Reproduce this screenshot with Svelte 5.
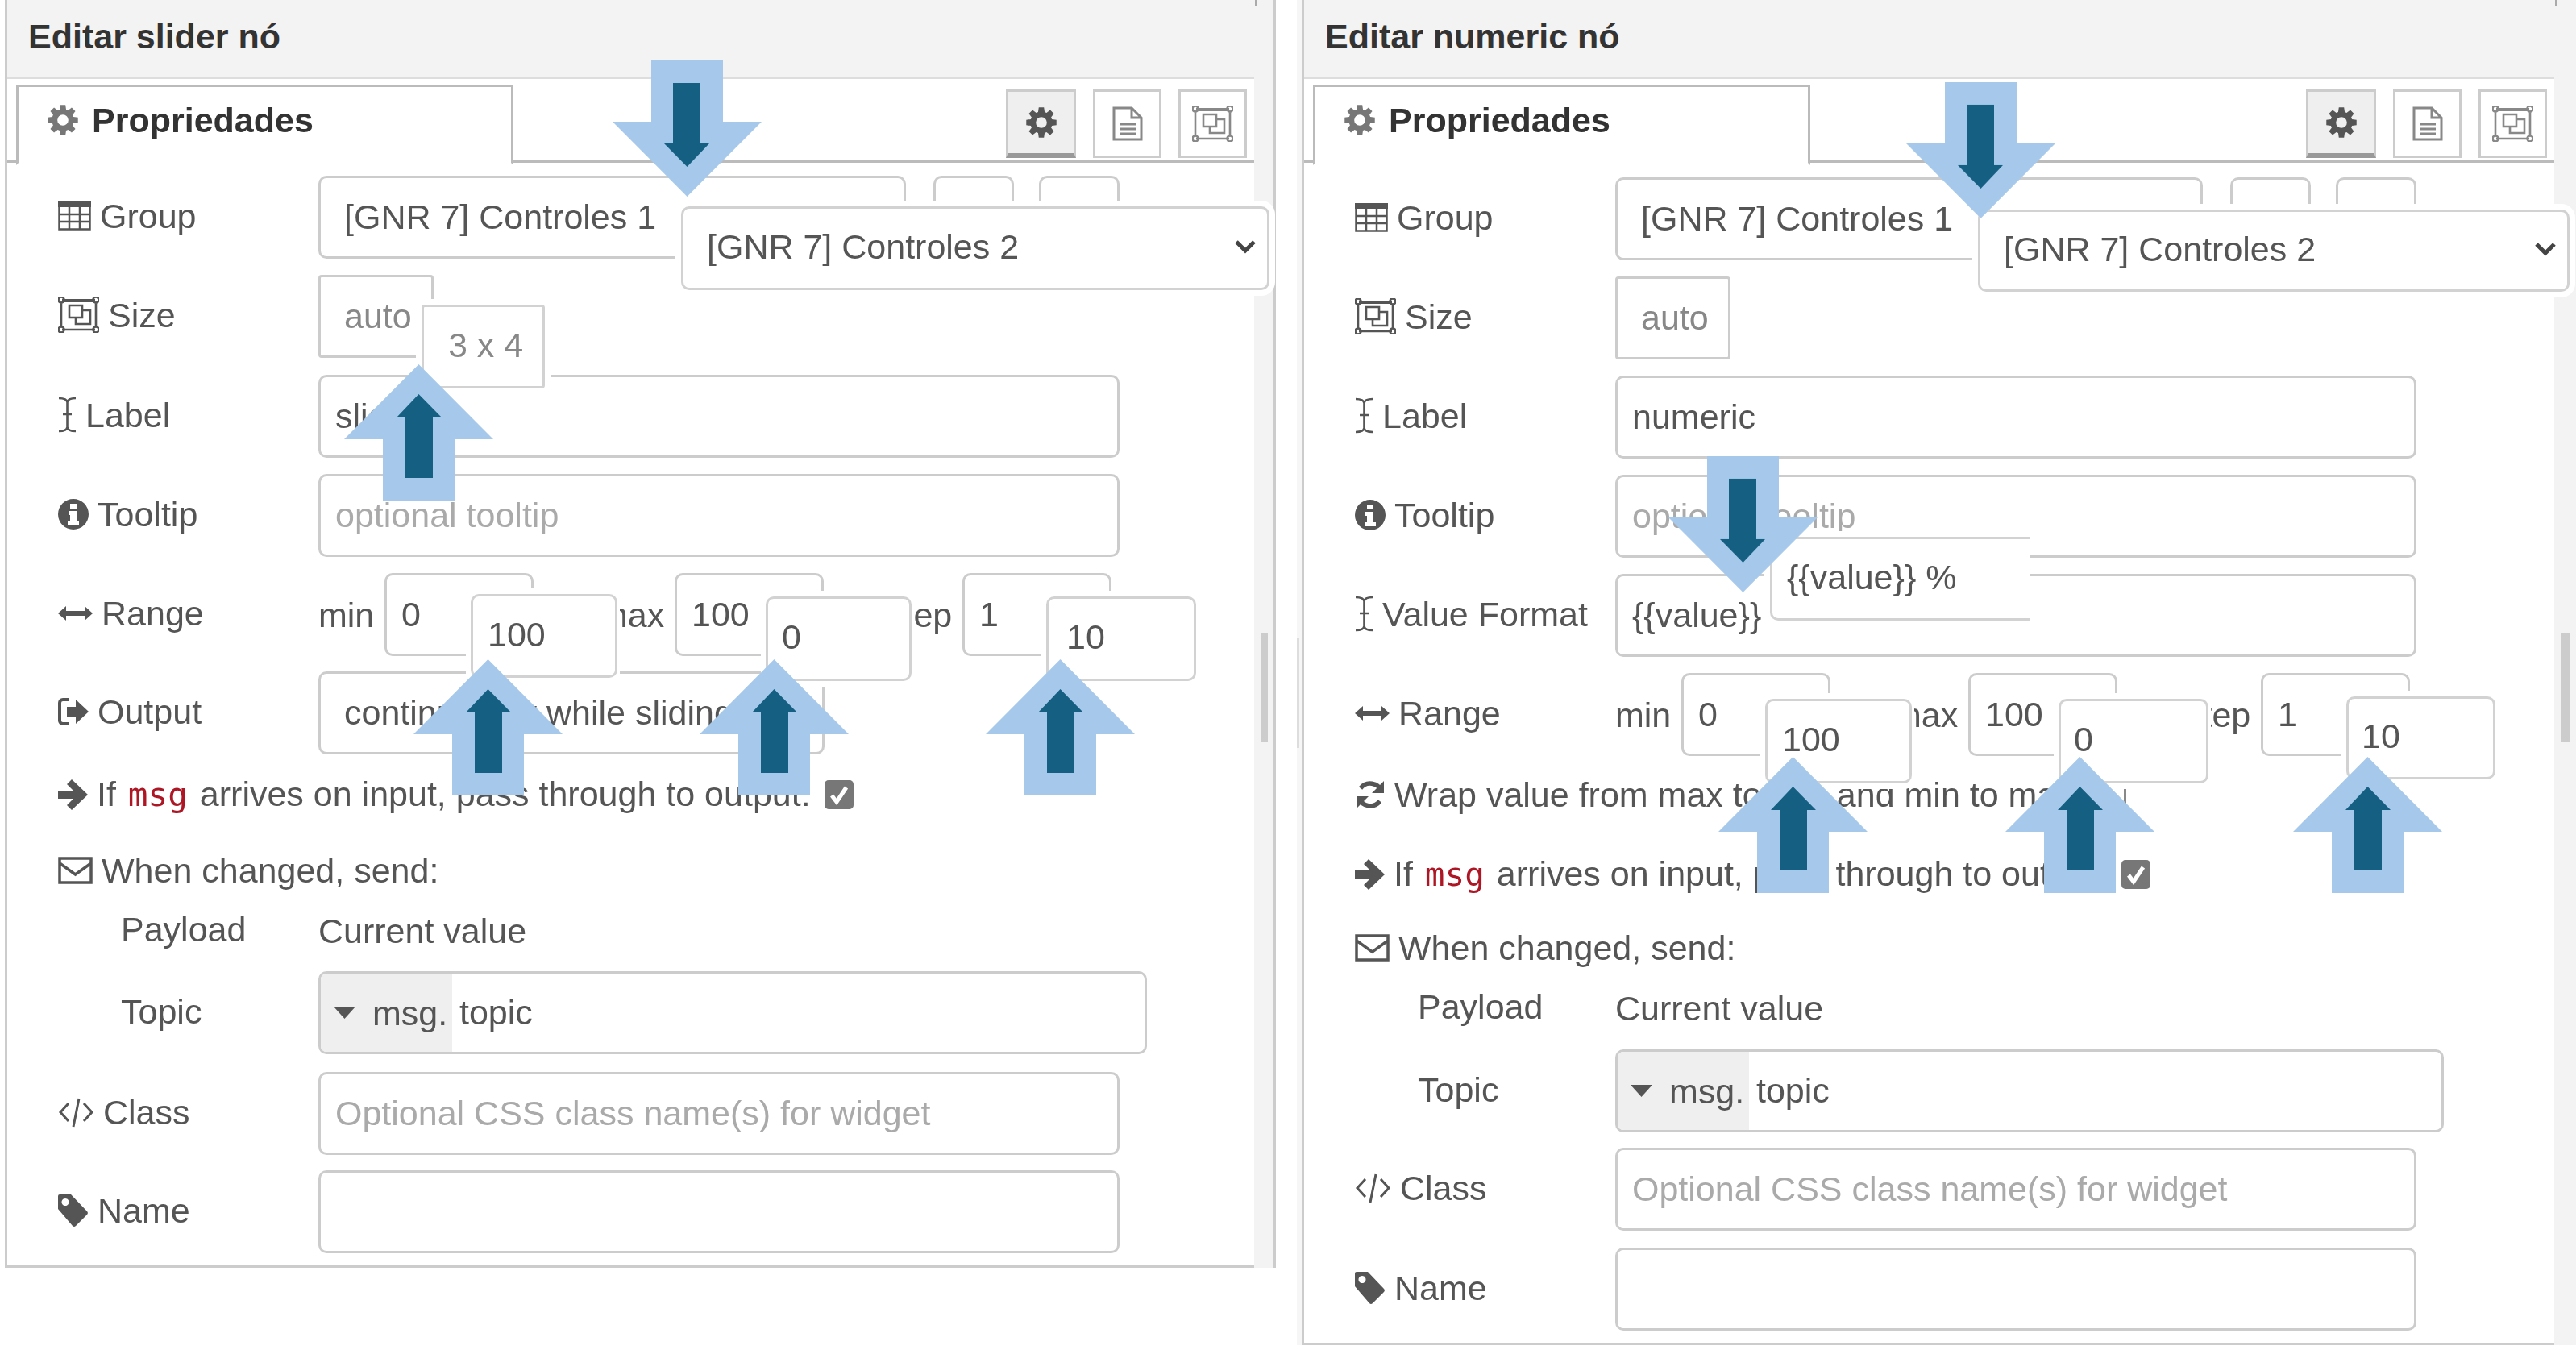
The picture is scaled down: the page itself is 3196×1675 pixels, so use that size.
<script>
  // gear outline shared by the tab and the toolbar button
  function gearPath(size) {
    const c = size / 2;
    const pts = [];
    for (let i = 0; i < 8; i++) {
      const a = (i * Math.PI) / 4;
      for (const [r, da] of [[c * 0.72, -0.3], [c, -0.17], [c, 0.17], [c * 0.72, 0.3]]) {
        pts.push(`${(c + r * Math.sin(a + da)).toFixed(2)} ${(c - r * Math.cos(a + da)).toFixed(2)}`);
      }
    }
    const h = c * 0.36;
    return `M${pts.join('L')}z M${c - h} ${c}a${h} ${h} 0 1 0 ${2 * h} 0a${h} ${h} 0 1 0 ${-2 * h} 0z`;
  }

  const corner = (x, y) => `M${x - 3.5} ${y}a3.5 3.5 0 1 0 7 0a3.5 3.5 0 1 0-7 0z`;

  const icons = {
    cog: { w: 38, h: 38, fill: gearPath(38) },
    table: { w: 41, h: 36, fill: 'M0 0h41v7H0z', stroke: 'M1.5 7v27.5h38V7M1.5 16h38M1.5 25h38M14 7v27M27 7v27', sw: 2.5 },
    size: {
      w: 51, h: 45, fill: 'M5 3h41v4H5z',
      stroke: `M5 41h41M4 7v31M47 7v31M14 11h16v15H14zM22 26v8h18V17h-10${corner(4, 4)}${corner(47, 4)}${corner(4, 41)}${corner(47, 41)}`,
      sw: 2.6
    },
    cursor: { w: 23, h: 45, stroke: 'M1 2c6 0 10 1 10.5 5v31c-.5 4-4.5 5-10.5 5M22 2c-6 0-10 1-10.5 5M22 43c-6 0-10-1-10.5-5M6 22h11', sw: 2.6 },
    info: { w: 38, h: 38, fill: 'M19 0a19 19 0 1 0 0 38a19 19 0 1 0 0-38zM15 6h8v6h-8zM13 15h10v13h3v5H12v-5h3v-8h-2z' },
    range: { w: 43, h: 18, fill: 'M0 9l10-9v6h23V0l10 9-10 9v-6H10v6z' },
    output: { w: 38, h: 38, fill: 'M11 13h11V4l16 15-16 15v-9H11z', stroke: 'M14 4H6a4 4 0 0 0-4 4v22a4 4 0 0 0 4 4h8', sw: 4 },
    arrow: { w: 37, h: 38, fill: 'M0 14h19L11 6l6-6 20 19-20 19-6-6 8-8H0z' },
    mail: { w: 43, h: 34, stroke: 'M2 2h39v30H2zM2 8l19.5 14L41 8', sw: 3.5 },
    code: { w: 45, h: 38, stroke: 'M13 8L3 19l10 11M32 8l10 11-10 11M26 2l-7 35', sw: 3 },
    tag: { w: 38, h: 40, fill: 'M2 0h14l20 21a3 3 0 0 1 0 4L22 39a3 3 0 0 1-4 0L0 18V2a2 2 0 0 1 2-2zM9 5a4.5 4.5 0 1 0 .01 0z' },
    refresh: { w: 38, h: 38, fill: 'M36 2v15H21zM2 36V21h15z', stroke: 'M33 15A15 15 0 0 0 7 11M5 23a15 15 0 0 0 26 4', sw: 5.5 },
    doc: { w: 38, h: 43, stroke: 'M2 2h22l12 12v27H2zM24 2v12h12M9 22h20M9 28h20M9 34h20', sw: 3 }
  };

  const sliderRows = [
    { type: 'group', gap: 0 },
    { type: 'size', gap: 20 },
    { type: 'field', icon: 'cursor', label: 'Label', value: 'slider', gap: 21 },
    { type: 'field', icon: 'info', label: 'Tooltip', hint: 'optional tooltip', gap: 20 },
    { type: 'range', gap: 20 },
    { type: 'output', gap: 19 },
    { type: 'pass', gap: 24 },
    { type: 'when', gap: 44 },
    { type: 'payload', gap: 25 },
    { type: 'topic', gap: 25 },
    { type: 'field', icon: 'code', label: 'Class', hint: 'Optional CSS class name(s) for widget', gap: 22 },
    { type: 'field', icon: 'tag', label: 'Name', gap: 19 }
  ];

  const numericRows = [
    { type: 'group', gap: 0 },
    { type: 'size', gap: 20 },
    { type: 'field', icon: 'cursor', label: 'Label', value: 'numeric', gap: 20 },
    { type: 'field', icon: 'info', label: 'Tooltip', hint: 'optional tooltip', gap: 20 },
    { type: 'field', icon: 'cursor', label: 'Value Format', value: '{{value}}', gap: 20 },
    { type: 'range', gap: 20 },
    { type: 'wrap', gap: 23 },
    { type: 'pass', gap: 48 },
    { type: 'when', gap: 41 },
    { type: 'payload', gap: 25 },
    { type: 'topic', gap: 26 },
    { type: 'field', icon: 'code', label: 'Class', hint: 'Optional CSS class name(s) for widget', gap: 19 },
    { type: 'field', icon: 'tag', label: 'Name', gap: 21 }
  ];

  const panels = [
    { name: 'slider', rows: sliderRows },
    { name: 'numeric', rows: numericRows }
  ];

  // the new values pasted over the screenshot
  const callouts = [
    { x: 845, y: 256, w: 730, h: 104, text: '[GNR 7] Controles 2', pad: 29, chevron: true },
    { x: 523, y: 378, w: 153, h: 104, text: '3 x 4', pad: 30, muted: true, square: true },
    { x: 584, y: 737, w: 182, h: 104, text: '100', pad: 18, tight: true },
    { x: 950, y: 740, w: 181, h: 105, text: '0', pad: 17, tight: true },
    { x: 1298, y: 740, w: 186, h: 105, text: '10', pad: 22 },
    { x: 2454, y: 260, w: 734, h: 102, text: '[GNR 7] Controles 2', pad: 29, chevron: true },
    { x: 2196, y: 666, w: 322, h: 104, text: '{{value}} %', pad: 18, open: true },
    { x: 2190, y: 867, w: 182, h: 105, text: '100', pad: 18, tight: true },
    { x: 2554, y: 867, w: 186, h: 105, text: '0', pad: 16, tight: true },
    { x: 2911, y: 864, w: 185, h: 103, text: '10', pad: 16 }
  ];

  const arrows = [
    { x: 852, y: 75, down: true },
    { x: 519, y: 452 },
    { x: 605, y: 818 },
    { x: 960, y: 818 },
    { x: 1315, y: 818 },
    { x: 2457, y: 102, down: true },
    { x: 2162, y: 566, down: true },
    { x: 2224, y: 939 },
    { x: 2580, y: 939 },
    { x: 2937, y: 939 }
  ];
</script>

{#snippet icon(name)}
  {@const i = icons[name]}
  <svg class="icon" width={i.w} height={i.h} viewBox="0 0 {i.w} {i.h}" aria-hidden="true">
    {#if i.fill}<path d={i.fill} fill="currentColor" fill-rule="evenodd" />{/if}
    {#if i.stroke}<path d={i.stroke} fill="none" stroke="currentColor" stroke-width={i.sw} />{/if}
  </svg>
{/snippet}

{#snippet label(name, text)}
  <span class="label">{@render icon(name)}<span>{text}</span></span>
{/snippet}

{#snippet check(on)}
  <span class="check" class:on>
    {#if on}
      <svg width="36" height="36" viewBox="0 0 36 36" aria-hidden="true">
        <path d="M9 19l6 8 12-18" fill="none" stroke="#fff" stroke-width="5" />
      </svg>
    {/if}
  </span>
{/snippet}

<div class="page">
  {#each panels as panel}
    <section class="panel {panel.name}">
      <header class="title">Editar {panel.name} nó</header>
      <div class="body">
        <div class="content">
          <div class="tabs">
            <div class="tab">
              <span class="tab-icon">{@render icon('cog')}</span>
              Propriedades
            </div>
            <div class="tools">
              <button class="tool active">{@render icon('cog')}</button>
              <button class="tool">{@render icon('doc')}</button>
              <button class="tool">{@render icon('size')}</button>
            </div>
          </div>

          <div class="form">
            {#each panel.rows as row}
              <div class="row" style="margin-top: {row.gap}px">
                {#if row.type === 'group'}
                  {@render label('table', 'Group')}
                  <div class="box select">[GNR 7] Controles 1</div>
                  <div class="box small"></div>
                  <div class="box small"></div>
                {:else if row.type === 'size'}
                  {@render label('size', 'Size')}
                  <div class="box size">auto</div>
                {:else if row.type === 'field'}
                  {@render label(row.icon, row.label)}
                  <input class="box input" value={row.value ?? ''} placeholder={row.hint ?? ''} readonly />
                {:else if row.type === 'range'}
                  {@render label('range', 'Range')}
                  <span class="unit">min</span>
                  <input class="box num" value="0" readonly />
                  <span class="unit next max">max</span>
                  <input class="box num" value="100" readonly />
                  <span class="unit next step">step</span>
                  <input class="box num" value="1" readonly />
                {:else if row.type === 'output'}
                  {@render label('output', 'Output')}
                  <div class="box select output">continuously while sliding</div>
                {:else if row.type === 'pass'}
                  <span class="line">
                    {@render icon('arrow')}
                    <span>If <code>msg</code> arrives on input, pass through to output:</span>
                    {@render check(true)}
                  </span>
                {:else if row.type === 'wrap'}
                  <span class="line">
                    {@render icon('refresh')}
                    <span>Wrap value from max to min and min to max:</span>
                    {@render check(false)}
                  </span>
                {:else if row.type === 'when'}
                  <span class="line">{@render icon('mail')}<span>When changed, send:</span></span>
                {:else if row.type === 'payload'}
                  <span class="label indent">Payload</span>
                  <span>Current value</span>
                {:else if row.type === 'topic'}
                  <span class="label indent">Topic</span>
                  <div class="box typed">
                    <span class="type">
                      <svg width="27" height="15" viewBox="0 0 27 15" aria-hidden="true"><path d="M0 0h27L13.5 15z" fill="#555" /></svg>
                      msg.
                    </span>
                    <span class="typed-value">topic</span>
                  </div>
                {/if}
              </div>
            {/each}
          </div>
        </div>
        <div class="side"><div class="thumb"></div></div>
      </div>
    </section>
  {/each}

  <!-- annotations laid over the two screenshots -->
  {#each callouts as c}
    <div
      class="callout"
      class:muted={c.muted}
      class:square={c.square}
      class:open={c.open}
      class:tight={c.tight}
      style="left: {c.x}px; top: {c.y}px; width: {c.w}px; height: {c.h}px; padding-left: {c.pad}px"
    >
      {c.text}
      {#if c.chevron}
        <svg class="chevron" width="28" height="18" viewBox="0 0 28 18" aria-hidden="true">
          <path d="M3 3l11 11L25 3" fill="none" stroke="#444" stroke-width="5" />
        </svg>
      {/if}
    </div>
  {/each}

  {#each arrows as a}
    <svg
      class="arrow"
      class:down={a.down}
      style="left: {a.x - 92.5}px; top: {a.y}px"
      width="185"
      height="169"
      viewBox="0 0 185 169"
      aria-hidden="true"
    >
      <path d="M92.5 0L185 93h-48v76H48V93H0z" fill="#a6c9eb" />
      <path d="M92.5 37L121 66h-11v75H76V66H65z" fill="#156082" />
    </svg>
  {/each}
</div>

<style>
  :global(body) {
    margin: 0;
    background: #fff;
  }

  .page {
    position: relative;
    display: flex;
    align-items: flex-start;
    width: 3196px;
    height: 1675px;
    padding-left: 6px;
    box-sizing: border-box;
    overflow: hidden;
    background: #fff;
    color: #555;
    font-family: "Liberation Sans", Arial, sans-serif;
    font-size: 43px;
  }

  .panel {
    position: relative;
    flex: none;
    box-sizing: border-box;
    border-left: 3px solid #ccc;
    filter: blur(0.6px);
  }

  .panel.slider {
    width: 1577px;
    border-right: 3px solid #ccc;
  }

  .panel.numeric {
    width: 1581px;
    margin-left: 32px;
    box-shadow: -6px 0 0 #f6f6f6;
  }

  /* faint scrollbar of the panel cropped between the two shots */
  .panel.numeric::before {
    content: "";
    position: absolute;
    left: -9px;
    top: 792px;
    width: 3px;
    height: 136px;
    background: #ddd;
  }

  .title {
    position: relative;
    height: 95px;
    padding-left: 26px;
    background: #f3f3f3;
    color: #333;
    font-weight: 700;
    line-height: 90px;
  }

  .title::after {
    content: "";
    position: absolute;
    top: 0;
    right: 21px;
    width: 2px;
    height: 8px;
    background: #aaa;
  }

  .numeric .title::after {
    right: 24px;
  }

  .body {
    display: flex;
  }

  .content {
    flex: 1;
    min-width: 0;
    border-top: 3px solid #ddd;
    border-bottom: 3px solid #ccc;
  }

  .side {
    flex: none;
    width: 24px;
    padding: 690px 7px 0 9px;
    box-sizing: border-box;
    background: #f3f3f3;
  }

  .numeric .side {
    width: 27px;
  }

  .thumb {
    height: 136px;
    background: #ccc;
  }

  .tabs {
    display: flex;
    align-items: flex-start;
    height: 104px;
    padding-top: 7px;
    box-sizing: border-box;
    border-bottom: 3px solid #bbb;
  }

  .tab {
    display: flex;
    align-items: center;
    gap: 17px;
    width: 617px;
    height: 100px;
    margin-left: 11px;
    padding: 0 0 12px 36px;
    box-sizing: border-box;
    border: 3px solid #bbb;
    border-bottom: 3px solid #fff;
    background: #fff;
    color: #333;
    font-weight: 700;
  }

  .tab-icon {
    display: flex;
    color: #777;
  }

  .tools {
    display: flex;
    gap: 21px;
    margin: 6px 9px 0 auto;
  }

  .tool {
    display: flex;
    align-items: center;
    justify-content: center;
    width: 85px;
    height: 85px;
    padding: 0;
    border: 3px solid #ccc;
    background: #fff;
    color: #888;
  }

  .tool.active {
    width: 87px;
    background: #efefef;
    border-bottom: 6px solid #999;
    color: #555;
  }

  .form {
    padding: 16px 0 15px 63px;
  }

  .numeric .form {
    padding-top: 18px;
  }

  .row {
    display: flex;
    align-items: center;
    min-height: 50px;
    line-height: 50px;
    white-space: nowrap;
  }

  .label {
    display: flex;
    align-items: center;
    gap: 11px;
    flex: none;
    width: 323px;
    transform: translateY(-2px);
  }

  .label.indent {
    padding-left: 78px;
    box-sizing: border-box;
  }

  .icon {
    flex: none;
  }

  .box {
    flex: none;
    height: 103px;
    box-sizing: border-box;
    border: 3px solid #ccc;
    border-radius: 10px;
    background: #fff;
    color: #555;
    font: inherit;
    line-height: 96px;
  }

  input.box {
    outline: none;
  }

  input.box::placeholder {
    color: #aaa;
    opacity: 1;
  }

  .select {
    width: 729px;
    padding-left: 29px;
  }

  .select.output {
    width: 628px;
    overflow: hidden;
  }

  .small {
    width: 100px;
    margin-left: 34px;
  }

  .small + .small {
    margin-left: 31px;
  }

  .size {
    width: 143px;
    padding-left: 29px;
    border-radius: 4px;
    color: #888;
  }

  .input {
    width: 994px;
    padding: 0 18px;
  }

  .unit {
    width: 69px;
    margin-right: 13px;
  }

  .unit.next {
    width: 81px;
  }

  .unit.max {
    margin-left: 81px;
  }

  .unit.step {
    margin-left: 78px;
  }

  .numeric .unit.max {
    margin-left: 77px;
  }

  .numeric .unit.step {
    margin-left: 84px;
  }

  .num {
    width: 185px;
    padding: 0 18px;
  }

  .line {
    display: flex;
    align-items: center;
    gap: 11px;
  }

  .line code {
    margin: 0 3px;
    color: #ad1625;
    font-family: "DejaVu Sans Mono", monospace;
    font-size: 41px;
  }

  .check {
    flex: none;
    width: 36px;
    height: 36px;
    margin-left: 6px;
    box-sizing: border-box;
    border: 3px solid #888;
    border-radius: 5px;
    background: #fff;
  }

  .check.on {
    border: none;
    background: #777;
  }

  .check svg {
    display: block;
  }

  .typed {
    display: flex;
    width: 1028px;
    overflow: hidden;
  }

  .type {
    display: flex;
    align-items: center;
    gap: 21px;
    width: 163px;
    padding-left: 16px;
    box-sizing: border-box;
    background: #efefef;
  }

  .typed-value {
    padding-left: 9px;
  }

  .callout {
    position: absolute;
    display: flex;
    align-items: center;
    padding-bottom: 4px;
    box-sizing: border-box;
    border: 3px solid #d2d2d2;
    border-radius: 10px;
    background: #fff;
    box-shadow: 0 0 0 7px #fff;
    filter: blur(0.6px);
  }

  .callout.muted {
    color: #888;
  }

  .callout.square {
    border-radius: 4px;
  }

  .callout.tight {
    clip-path: inset(-10px -3px -10px -6px);
  }

  .callout.open {
    border-right: none;
    border-radius: 10px 0 0 10px;
    clip-path: inset(-10px 0 -10px -10px);
  }

  .chevron {
    margin-left: auto;
    margin-right: 13px;
  }

  .arrow {
    position: absolute;
  }

  .arrow.down {
    transform: rotate(180deg);
  }
</style>
